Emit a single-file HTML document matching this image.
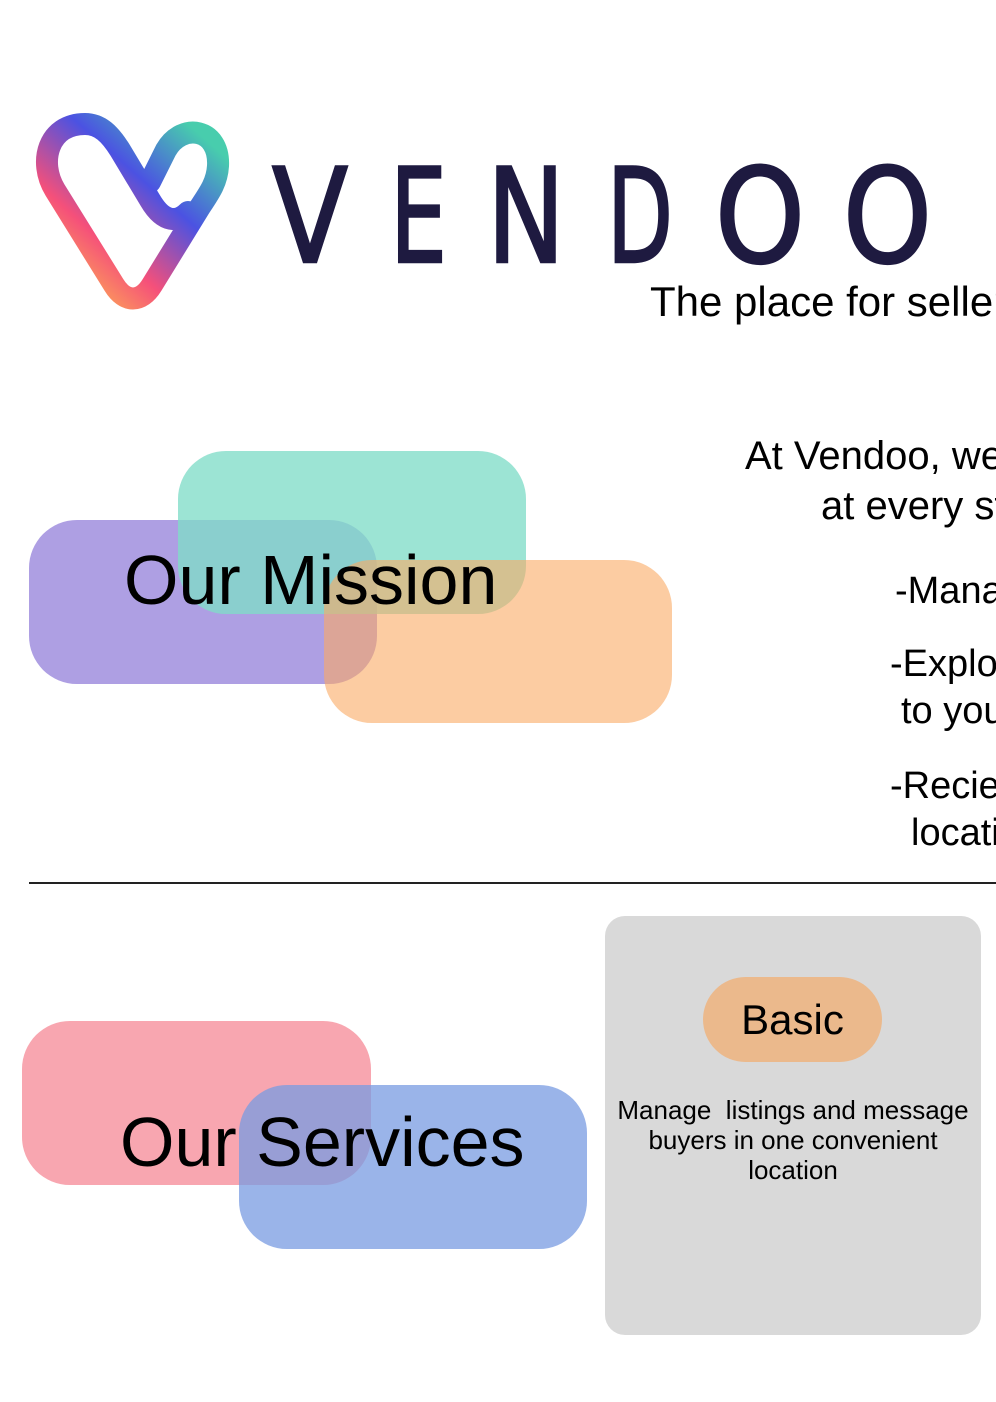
<!DOCTYPE html>
<html><head><meta charset="utf-8"><style>
html,body{margin:0;padding:0}
body{width:996px;height:1402px;position:relative;overflow:hidden;background:#fff;font-family:"Liberation Sans",sans-serif;color:#000}
.a{position:absolute;white-space:nowrap}
.box{position:absolute;border-radius:48px}
.clip{position:absolute;left:0;top:0;width:996px;height:1402px;overflow:hidden}
</style></head><body>
<div class="clip">
<svg class="a" style="left:0;top:0" width="260" height="330" viewBox="0 0 260 330">
<defs><linearGradient id="g" x1="60" y1="300" x2="220" y2="120" gradientUnits="userSpaceOnUse">
<stop offset="0" stop-color="#ffc34a"/><stop offset="0.3" stop-color="#f5507a"/><stop offset="0.6" stop-color="#4b52e2"/><stop offset="0.9" stop-color="#48cdad"/></linearGradient></defs>
<path d="M150,182 L166,150 C182,122 220,128 218,166 C217,182 210,192 200,207 L152,285 C141,303 125,303 114,285 L55,190 C38,162 48,124 85,124 C100,124 110,134 120,150 L150,200 C164,224 178,222 188,212" fill="none" stroke="url(#g)" stroke-width="22" stroke-linecap="round"/>
</svg>
<svg class="a" style="left:0;top:0" width="996" height="300">
<g font-family="DejaVu Sans, Liberation Sans, sans-serif" font-size="131" fill="#1e1a40" stroke="#1e1a40" stroke-width="2.5">
<text x="272" y="262" textLength="76" lengthAdjust="spacingAndGlyphs">V</text>
<text x="390" y="262" textLength="57" lengthAdjust="spacingAndGlyphs">E</text>
<text x="487" y="262" textLength="78" lengthAdjust="spacingAndGlyphs">N</text>
<text x="607" y="262" textLength="66" lengthAdjust="spacingAndGlyphs">D</text>
<text x="715" y="262" textLength="90" lengthAdjust="spacingAndGlyphs">O</text>
<text x="843" y="262" textLength="89" lengthAdjust="spacingAndGlyphs">O</text>
</g></svg>
<div class="a" style="left:650px;top:278px;font-size:42px">The place for sellers</div>

<div class="box" style="left:29px;top:520px;width:348px;height:164px;background:#ae9fe3"></div>
<div class="box" style="left:178px;top:451px;width:348px;height:163px;background:rgba(128,220,200,0.78)"></div>
<div class="box" style="left:324px;top:560px;width:348px;height:163px;background:rgba(250,170,100,0.6)"></div>
<div class="a" style="left:124px;top:540px;font-size:70px">Our Mission</div>

<div class="a" style="left:745px;top:434px;font-size:40px">At Vendoo, we support you</div>
<div class="a" style="left:821px;top:484px;font-size:40px">at every step</div>
<div class="a" style="left:895px;top:570px;font-size:38px">-Manage</div>
<div class="a" style="left:890px;top:643px;font-size:38px">-Explore</div>
<div class="a" style="left:901px;top:690px;font-size:38px">to your</div>
<div class="a" style="left:890px;top:765px;font-size:38px">-Recieve</div>
<div class="a" style="left:911px;top:812px;font-size:38px">location</div>

<div class="a" style="left:29px;top:882px;width:967px;height:2px;background:#222"></div>

<div class="box" style="left:22px;top:1021px;width:349px;height:164px;background:#f8a6b0"></div>
<div class="box" style="left:239px;top:1085px;width:348px;height:164px;background:rgba(120,155,225,0.75)"></div>
<div class="a" style="left:120px;top:1102px;font-size:70px">Our Services</div>

<div class="a" style="left:605px;top:916px;width:376px;height:419px;background:#d9d9d9;border-radius:20px"></div>
<div class="a" style="left:703px;top:977px;width:179px;height:85px;background:#ebb98c;border-radius:43px;font-size:42px;text-align:center;line-height:85px">Basic</div>
<div class="a" style="left:605px;top:1095px;width:376px;text-align:center;font-size:26px;line-height:30px;white-space:normal">Manage&nbsp; listings and message<br>buyers in one convenient<br>location</div>
</div>
</body></html>
